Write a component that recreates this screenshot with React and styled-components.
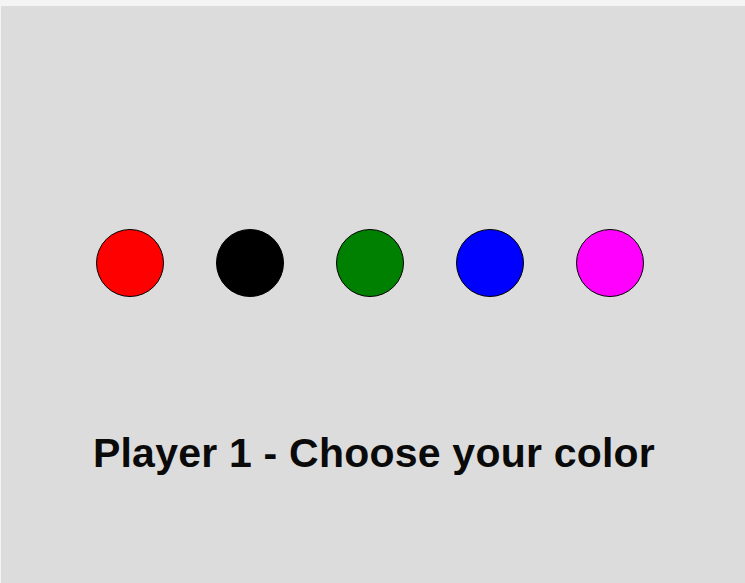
import React from "react";
import styled, { createGlobalStyle } from "styled-components";

const Global = createGlobalStyle`
  html, body { margin: 0; padding: 0; background: #ffffff; }
  body { font-family: "Liberation Sans", Arial, sans-serif; }
`;

const Frame = styled.div`
  width: 745px;
  height: 583px;
  padding-top: 6px;
  box-sizing: border-box;
  background: #f4f4f4;
  display: flex;
`;

const Panel = styled.div`
  flex: 1;
  margin-left: 1px;
  background: #dcdcdc;
  display: flex;
  flex-direction: column;
  align-items: center;
  padding-top: 223px;
  box-sizing: border-box;
`;

const Swatches = styled.div`
  display: flex;
  gap: 52px;
  margin-left: -7px;
`;

const Swatch = styled.button`
  width: 68px;
  height: 68px;
  border-radius: 50%;
  border: 1px solid #000;
  background: ${(p) => p.$color};
  padding: 0;
  box-sizing: border-box;
  cursor: pointer;
`;

const Prompt = styled.h1`
  margin: 136px 0 0 2px;
  font-family: "Liberation Sans", Arial, sans-serif;
  font-weight: bold;
  font-size: 41px;
  letter-spacing: 0.22px;
  line-height: 1;
  color: #0a0a0a;
`;

const colors = ["#ff0000", "#000000", "#008000", "#0000ff", "#ff00ff"];

export default function App() {
  return (
    <>
      <Global />
      <Frame>
        <Panel>
          <Swatches>
            {colors.map((c) => (
              <Swatch key={c} $color={c} aria-label={c} />
            ))}
          </Swatches>
          <Prompt>Player 1 - Choose your color</Prompt>
        </Panel>
      </Frame>
    </>
  );
}
